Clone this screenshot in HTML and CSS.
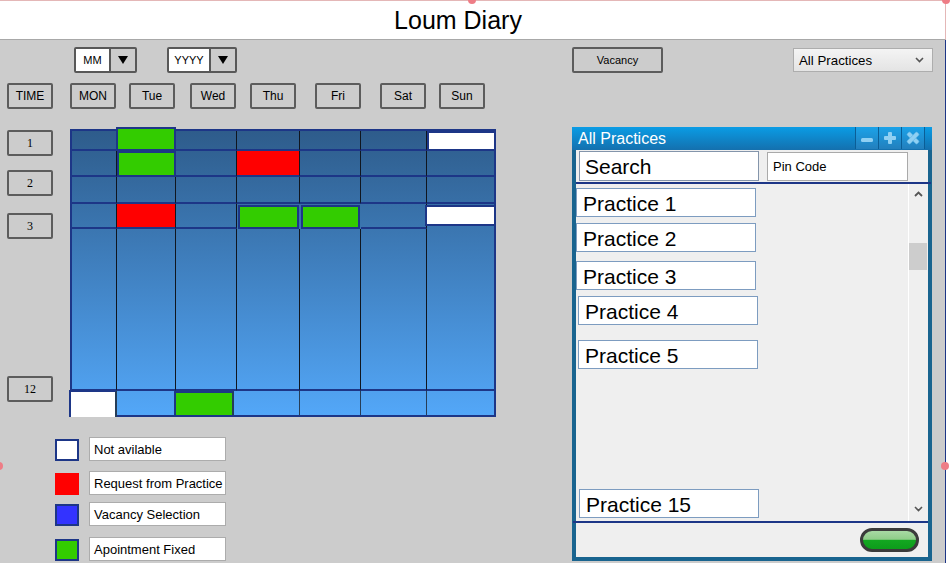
FILE: index.html
```html
<!DOCTYPE html>
<html lang="en">
<head>
<meta charset="utf-8">
<title>Loum Diary</title>
<link rel="stylesheet" href="styles.css">
</head>
<body>
<div class="page">
  <header class="titlebar">Loum Diary</header>
  <main class="main">
    <div class="toolbar">
      <div class="combo combo-mm">
        <span class="combo-val">MM</span>
        <span class="combo-btn"><svg width="10" height="8" viewBox="0 0 10 8"><polygon points="0,0 10,0 5,8" fill="#000"/></svg></span>
      </div>
      <div class="combo combo-yy">
        <span class="combo-val">YYYY</span>
        <span class="combo-btn"><svg width="10" height="8" viewBox="0 0 10 8"><polygon points="0,0 10,0 5,8" fill="#000"/></svg></span>
      </div>
      <div class="btn vacancy">Vacancy</div>
      <div class="select">
        <span>All Practices</span>
        <svg width="9" height="6" viewBox="0 0 9 6"><polyline points="1,1 4.5,4.5 8,1" fill="none" stroke="#555" stroke-width="1.6"/></svg>
      </div>
    </div>

    <div class="content">
      <div class="left">
        <div class="days">
          <div class="btn day">TIME</div>
          <div class="btn day day-mon">MON</div>
          <div class="btn day day-tue">Tue</div>
          <div class="btn day day-wed">Wed</div>
          <div class="btn day day-thu">Thu</div>
          <div class="btn day day-fri">Fri</div>
          <div class="btn day day-sat">Sat</div>
          <div class="btn day day-sun">Sun</div>
        </div>

        <div class="schedule">
          <div class="times">
            <div class="btn time time-1">1</div>
            <div class="btn time time-2">2</div>
            <div class="btn time time-3">3</div>
            <div class="btn time time-12">12</div>
          </div>
          <div class="grid">
            <!-- row 1 -->
            <div class="cell"></div><div class="cell green up"></div><div class="cell"></div><div class="cell"></div><div class="cell"></div><div class="cell"></div><div class="cell white"></div>
            <!-- row 2 -->
            <div class="cell"></div><div class="cell green"></div><div class="cell"></div><div class="cell red"></div><div class="cell"></div><div class="cell"></div><div class="cell"></div>
            <!-- row 3 -->
            <div class="cell"></div><div class="cell"></div><div class="cell"></div><div class="cell"></div><div class="cell"></div><div class="cell"></div><div class="cell"></div>
            <!-- row 4 -->
            <div class="cell"></div><div class="cell red"></div><div class="cell"></div><div class="cell green inset"></div><div class="cell green inset"></div><div class="cell"></div><div class="cell white short"></div>
            <!-- row 5 -->
            <div class="cell"></div><div class="cell"></div><div class="cell"></div><div class="cell"></div><div class="cell"></div><div class="cell"></div><div class="cell"></div>
            <!-- row 6 -->
            <div class="cell white out"></div><div class="cell"></div><div class="cell green shift"></div><div class="cell"></div><div class="cell"></div><div class="cell"></div><div class="cell"></div>
          </div>
        </div>

        <div class="legend">
          <div class="legend-row"><span class="swatch"></span><span class="legend-label">Not avilable</span></div>
          <div class="legend-row"><span class="swatch swatch-red"></span><span class="legend-label">Request from Practice</span></div>
          <div class="legend-row legend-row-tight"><span class="swatch swatch-blue"></span><span class="legend-label">Vacancy Selection</span></div>
          <div class="legend-row legend-row-loose"><span class="swatch swatch-green"></span><span class="legend-label">Apointment Fixed</span></div>
        </div>
      </div>

      <section class="window">
        <div class="win-head">
          <span class="win-title">All Practices</span>
          <div class="win-ctrls">
            <span class="win-ctrl"><svg width="14" height="14" viewBox="0 0 14 14"><rect x="1" y="7" width="12" height="4" rx="1.5" fill="#8fd0f3"/></svg></span>
            <span class="win-ctrl"><svg width="14" height="14" viewBox="0 0 14 14"><rect x="1" y="5" width="12" height="4" rx="1" fill="#8fd0f3"/><rect x="5" y="1" width="4" height="12" rx="1" fill="#8fd0f3"/></svg></span>
            <span class="win-ctrl"><svg width="14" height="14" viewBox="0 0 14 14"><g transform="rotate(45 7 7)"><rect x="0" y="5" width="14" height="4" rx="1" fill="#8fd0f3" stroke="#5db4e6" stroke-width=".6"/><rect x="5" y="0" width="4" height="14" rx="1" fill="#8fd0f3" stroke="#5db4e6" stroke-width=".6"/></g></svg></span>
          </div>
        </div>
        <div class="win-body">
          <div class="search-row">
            <div class="search">Search</div>
            <div class="pincode">Pin Code</div>
          </div>
          <div class="rule"></div>
          <div class="list-wrap">
            <div class="list">
              <div class="item item-1">Practice 1</div>
              <div class="item item-2">Practice 2</div>
              <div class="item item-3">Practice 3</div>
              <div class="item item-4">Practice 4</div>
              <div class="item item-5">Practice 5</div>
              <div class="item item-15">Practice 15</div>
            </div>
            <div class="scrollbar">
              <svg class="chev-up" width="9" height="6" viewBox="0 0 9 6"><polyline points="1,5 4.5,1.5 8,5" fill="none" stroke="#555" stroke-width="1.8"/></svg>
              <div class="thumb"></div>
              <svg class="chev-down" width="9" height="6" viewBox="0 0 9 6"><polyline points="1,1 4.5,4.5 8,1" fill="none" stroke="#555" stroke-width="1.6"/></svg>
            </div>
          </div>
          <div class="rule rule-bottom"></div>
          <div class="win-foot">
            <div class="go"></div>
          </div>
        </div>
      </section>
    </div>
  </main>
  <span class="dot dot-top"></span>
  <span class="dot dot-corner"></span>
  <span class="dot dot-left"></span>
  <span class="dot dot-right"></span>
</div>
</body>
</html>
```

FILE: styles.css
```css
* { box-sizing: border-box; margin: 0; padding: 0; }

body {
  background: #fff;
  font-family: "Liberation Sans", Arial, sans-serif;
  color: #000;
  width: 951px;
  height: 573px;
  overflow: hidden;
}

.page { position: relative; width: 946px; }

.titlebar {
  height: 40px;
  background: #fff;
  border-top: 1px solid #e4b7b7;
  border-right: 1px solid #e4b7b7;
  border-bottom: 1px solid #a8a8a8;
  font-size: 25px;
  line-height: 38px;
  text-align: center;
  padding-right: 29px;
}

.main {
  height: 523px;
  background: #cccccc;
  border-right: 1px solid #1d3687;
  display: flex;
  flex-direction: column;
}

/* toolbar */
.toolbar { display: flex; align-items: center; height: 26px; margin-top: 7px; }

.combo {
  display: flex;
  height: 26px;
  border: 2px solid #585858;
  border-radius: 2px;
  background: #fff;
}
.combo-mm { margin-left: 74px; width: 63px; }
.combo-yy { margin-left: 30px; width: 70px; }
.combo-val { flex: 1; display: flex; align-items: center; justify-content: center; font-size: 11px; }
.combo-btn {
  width: 26px;
  border-left: 2px solid #585858;
  background: #cccccc;
  display: flex;
  align-items: center;
  justify-content: center;
}

.btn {
  display: flex;
  align-items: center;
  justify-content: center;
  height: 26px;
  border: 2px solid #5c5c5c;
  border-radius: 2px;
  background: #cccccc;
  font-size: 12px;
}
.vacancy { margin-left: 335px; width: 91px; font-size: 11px; }

.select {
  margin-left: 130px;
  width: 140px;
  height: 24px;
  border: 1px solid #adadad;
  background: linear-gradient(#f4f4f4, #e4e4e4);
  font-size: 13.3px;
  padding: 0 8px 0 5px;
  display: flex;
  align-items: center;
  justify-content: space-between;
}

/* content */
.content { display: flex; flex: 1; }
.left { width: 572px; display: flex; flex-direction: column; }

.days { display: flex; margin-top: 10px; padding-left: 7px; }
.day { width: 46px; }
.day-mon { margin-left: 17px; }
.day-tue { margin-left: 13px; }
.day-wed { margin-left: 15px; }
.day-thu { margin-left: 14px; }
.day-fri { margin-left: 19px; }
.day-sat { margin-left: 19px; }
.day-sun { margin-left: 13px; }

.schedule { display: flex; align-items: flex-start; margin-top: 20px; }
.times { width: 53px; padding-left: 7px; display: flex; flex-direction: column; }
.time { width: 46px; font-family: "Liberation Serif", "Times New Roman", serif; font-size: 12px; }
.time-1 { margin-top: 1px; }
.time-2 { margin-top: 14px; }
.time-3 { margin-top: 17px; }
.time-12 { margin-top: 137px; }

.grid {
  margin-left: 17px;
  width: 426px;
  height: 288px;
  border: 2px solid #1d3687;
  display: grid;
  grid-template-columns: 45px 59px 61px 63px 61px 66px 67px;
  grid-template-rows: 20px 26px 27px 25px 162px 24px;
  background: linear-gradient(#2e5c8b, #53a7f8);
}
.cell {
  border-right: 1px solid #10161f;
  border-bottom: 2px solid #1d3687;
}
.grid > .cell:nth-child(7n) { border-right: 0; }
.grid > .cell:nth-child(n+36) { border-bottom: 0; border-right-color: #263d57; }

.cell.green { background: #33cc00; border: 2px solid #1d3687; }
.cell.red { background: #ff0000; }
.cell.white { background: #fff; border: 2px solid #1d3687; }
.cell.up { margin-top: -4px; margin-left: -1px; }
.cell.inset { margin: 1px 1px 0 1px; }
.cell.short { margin: 1px 0 3px -2px; }
.grid > .cell.out { margin: -1px 0 -2px -3px; }
.cell.shift { margin: 0 3px 0 -2px; }

/* legend */
.legend { margin-left: 55px; margin-top: 20px; display: flex; flex-direction: column; }
.legend-row { display: flex; align-items: flex-end; margin-top: 10px; }
.legend-row:first-child { margin-top: 0; }
.legend-row-tight { margin-top: 7px; }
.legend-row-loose { margin-top: 11px; }
.swatch { width: 24px; height: 22px; border: 2px solid #1d3687; background: #fff; }
.swatch-red { border: 0; background: #ff0000; }
.swatch-blue { background: #3333ff; }
.swatch-green { background: #33cc00; }
.legend-label {
  margin-left: 10px;
  width: 137px;
  height: 24px;
  border: 1px solid #acacac;
  background: #fff;
  font-size: 13px;
  line-height: 22px;
  padding: 1px 0 0 4px;
  white-space: nowrap;
}

/* window */
.window {
  margin-top: 54px;
  width: 360px;
  height: 434px;
  display: flex;
  flex-direction: column;
}
.win-head {
  height: 23px;
  background: linear-gradient(#0a9ce5, #1470ae);
  display: flex;
  align-items: flex-start;
  color: #fff;
}
.win-title { flex: 1; font-size: 16px; line-height: 23px; padding-left: 6px; }
.win-ctrls { display: flex; margin-right: 7px; height: 22px; border-right: 1px solid #0b5e96; }
.win-ctrl {
  width: 23px;
  height: 22px;
  border-left: 1px solid #0b5e96;
  background: rgba(120, 200, 255, 0.16);
  display: flex;
  align-items: center;
  justify-content: center;
}

.win-body {
  flex: 1;
  border: 4px solid #19648f;
  border-top: 0;
  background: #efefef;
  display: flex;
  flex-direction: column;
}
.search-row { height: 32px; display: flex; align-items: flex-start; padding-top: 1px; }
.search {
  margin-left: 3px;
  width: 180px;
  height: 30px;
  border: 1px solid #8495ab;
  background: #fff;
  font-size: 21px;
  line-height: 26px;
  padding: 2px 0 0 5px;
}
.pincode {
  margin-left: 8px;
  margin-top: 1px;
  width: 141px;
  height: 29px;
  border: 1px solid #aaaaaa;
  background: #fff;
  font-size: 13px;
  line-height: 27px;
  padding-left: 5px;
}
.rule { height: 2px; background: #1d3687; margin-right: -3px; }
.rule-bottom { margin-left: -3px; margin-right: 0; }

.list-wrap { flex: 1; display: flex; }
.list { flex: 1; display: flex; flex-direction: column; align-items: flex-start; }
.item {
  width: 180px;
  height: 29px;
  border: 1px solid #7d9cc0;
  background: #fff;
  font-size: 21px;
  line-height: 24px;
  padding: 3px 0 0 6px;
}
.item-1 { margin-top: 4px; }
.item-2 { margin-top: 6px; }
.item-3 { margin-top: 9px; }
.item-4 { margin-top: 6px; margin-left: 2px; }
.item-5 { margin-top: 15px; margin-left: 2px; }
.item-15 { margin-top: auto; margin-left: 3px; margin-bottom: 3px; }

.scrollbar {
  width: 20px;
  border-left: 1px solid #ffffff;
  display: flex;
  flex-direction: column;
  align-items: center;
}
.chev-up { margin-top: 7px; }
.thumb { margin-top: 46px; width: 18px; height: 27px; background: #cdcdcd; align-self: flex-start; }
.chev-down { margin-top: auto; margin-bottom: 9px; }

.win-foot { height: 34px; display: flex; justify-content: flex-end; padding: 5px 9px 0 0; }
.go {
  width: 59px;
  height: 24px;
  border: 3px solid #3b3b3b;
  border-radius: 12px;
  background: linear-gradient(#a8daa4 0%, #8fcd89 46%, #13a721 52%, #0d9c1b 100%);
}

/* selection handles */
.dot {
  position: absolute;
  width: 8px;
  height: 8px;
  border-radius: 50%;
  background: #ee7d86;
}
.dot-top { left: 468px; top: -4px; }
.dot-corner { left: 942px; top: -4px; }
.dot-left { left: -5px; top: 462px; }
.dot-right { left: 941px; top: 462px; }
```
